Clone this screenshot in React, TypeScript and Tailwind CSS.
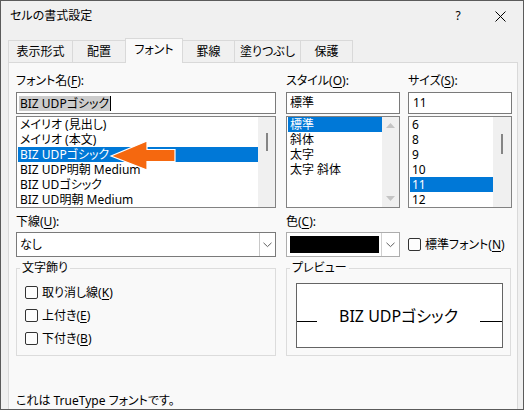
import React from "react";

const tabs = [
  { label: "表示形式", w: "w-[65px]" },
  { label: "配置", w: "w-[54px]" },
  { label: "フォント", w: "w-[58px]", active: true },
  { label: "罫線", w: "w-[53px]" },
  { label: "塗りつぶし", w: "w-[67px]" },
  { label: "保護", w: "w-[53px]" },
];

const fonts = [
  "メイリオ (見出し)",
  "メイリオ (本文)",
  "BIZ UDPゴシック",
  "BIZ UDP明朝 Medium",
  "BIZ UDゴシック",
  "BIZ UD明朝 Medium",
];
const styles = ["標準", "斜体", "太字", "太字 斜体"];
const sizes = ["6", "8", "9", "10", "11", "12"];

function U({ c }: { c: string }) {
  return <span className="underline underline-offset-2">{c}</span>;
}

function Chevron() {
  return (
    <svg width="9" height="6" viewBox="0 0 9 6" className="block">
      <path d="M0.5 0.8 L4.5 4.6 L8.5 0.8" fill="none" stroke="#606060" strokeWidth="1" />
    </svg>
  );
}

function Checkbox() {
  return <div className="w-[13px] h-[13px] border border-[#333333] rounded-[2px] bg-[#fdfdfd] shrink-0" />;
}

function ListItems({ items, selected }: { items: string[]; selected: number }) {
  return (
    <div className="flex-1 pl-px">
      {items.map((t, i) => (
        <div
          key={t}
          className={
            "h-[15px] leading-[15px] pl-[2px] whitespace-nowrap " +
            (i === selected ? "bg-[#0078d7] text-white" : "")
          }
        >
          {t}
        </div>
      ))}
    </div>
  );
}

export default function App() {
  return (
    <div className="relative w-[524px] h-[410px] border border-[#5b5b5b] bg-[#f0f0f0] flex flex-col text-[12px] text-black font-['Noto_Sans','Noto_Sans_CJK_JP',sans-serif] [font-feature-settings:'palt'] overflow-hidden">
      {/* title bar */}
      <div className="h-[30px] flex items-center pl-[9px] shrink-0">
        <span className="flex-1">セルの書式設定</span>
        <span className="w-[12px] text-center mr-[31px]">?</span>
        <svg width="11" height="11" viewBox="0 0 11 11" className="mr-[17px]">
          <path d="M0.5 0.5 L10.5 10.5 M10.5 0.5 L0.5 10.5" stroke="#000" strokeWidth="1" />
        </svg>
      </div>

      {/* tabs */}
      <div className="flex items-end pl-[7px] pt-[7px] shrink-0">
        {tabs.map((t, i) => (
          <div
            key={t.label}
            className={
              t.w +
              " flex items-center justify-center border-t border-l border-r border-[#d9d9d9] " +
              (i > 0 ? "-ml-px " : "") +
              (t.active ? "h-[25px] bg-[#f9f9f9] relative z-10 -mb-px pb-[2px]" : "h-[22px] bg-[#f0f0f0]")
            }
          >
            {t.label}
          </div>
        ))}
      </div>

      {/* panel */}
      <div className="flex-1 w-[510px] ml-[7px] border-t border-l border-r border-[#d9d9d9] bg-[#f9f9f9] pl-[7px] pt-[10px] flex flex-col">
        {/* row 1 */}
        <div className="flex">
          <div className="w-[260px] flex flex-col">
            <div className="h-[16px] leading-[16px]">
              フォント名(<U c="F" />):
            </div>
            <div className="mt-[3px] h-[22px] border border-[#7a7a7a] bg-white flex items-center pl-[2px]">
              <span className="bg-[#cccccc] leading-[15px] px-px">BIZ UDPゴシック</span>
              <span className="w-px h-[15px] bg-black" />
            </div>
            <div className="mt-[2px] h-[92px] border border-[#828282] bg-white flex">
              <ListItems items={fonts} selected={2} />
              <div className="w-[17px] bg-[#f0f0f0] relative">
                <div className="absolute left-[8px] top-[16px] w-[2px] h-[18px] bg-[#858585]" />
              </div>
            </div>
          </div>

          <div className="w-[114px] ml-[10px] flex flex-col">
            <div className="h-[16px] leading-[16px]">
              スタイル(<U c="O" />):
            </div>
            <div className="mt-[3px] h-[22px] border border-[#7a7a7a] bg-white flex items-center pl-[3px]">標準</div>
            <div className="mt-[2px] h-[92px] border border-[#828282] bg-white flex">
              <ListItems items={styles} selected={0} />
              <div className="w-[17px] bg-[#f0f0f0] flex flex-col items-center justify-between py-[6px]">
                <svg width="9" height="5" viewBox="0 0 9 5">
                  <path d="M0 5 L4.5 0 L9 5 Z" fill="#c4c4c4" />
                </svg>
                <svg width="9" height="5" viewBox="0 0 9 5">
                  <path d="M0 0 L4.5 5 L9 0 Z" fill="#c4c4c4" />
                </svg>
              </div>
            </div>
          </div>

          <div className="w-[104px] ml-[8px] flex flex-col">
            <div className="h-[16px] leading-[16px]">
              サイズ(<U c="S" />):
            </div>
            <div className="mt-[3px] h-[22px] border border-[#7a7a7a] bg-white flex items-center pl-[4px]">11</div>
            <div className="mt-[2px] h-[92px] border border-[#828282] bg-white flex">
              <ListItems items={sizes} selected={4} />
              <div className="w-[18px] bg-[#f0f0f0] relative">
                <div className="absolute left-[8px] top-[17px] w-[2px] h-[20px] bg-[#858585]" />
              </div>
            </div>
          </div>
        </div>

        {/* row 2 */}
        <div className="flex mt-[6px]">
          <div className="w-[260px] flex flex-col">
            <div className="h-[16px] leading-[16px]">
              下線(<U c="U" />):
            </div>
            <div className="mt-[2px] h-[25px] border border-[#7a7a7a] bg-white flex">
              <div className="flex-1 flex items-center pl-[3px]">なし</div>
              <div className="w-[16px] border-l border-[#c8c8c8] flex items-center justify-center">
                <Chevron />
              </div>
            </div>
          </div>

          <div className="w-[114px] ml-[10px] flex flex-col">
            <div className="h-[16px] leading-[16px]">
              色(<U c="C" />):
            </div>
            <div className="mt-[2px] h-[25px] border border-[#adadad] bg-white flex">
              <div className="flex-1 p-[3px] pr-[2px]">
                <div className="w-full h-full bg-black" />
              </div>
              <div className="w-[18px] border-l border-[#d0d0d0] flex items-center justify-center">
                <Chevron />
              </div>
            </div>
          </div>

          <div className="ml-[8px] flex flex-col">
            <div className="h-[16px]" />
            <div className="mt-[2px] h-[25px] flex items-center">
              <Checkbox />
              <span className="ml-[4px] whitespace-nowrap">
                標準フォント(<U c="N" />)
              </span>
            </div>
          </div>
        </div>

        {/* groups */}
        <div className="flex mt-[3px]">
          <fieldset className="w-[260px] h-[96px] border border-[#dcdcdc]">
            <legend className="ml-[3px] px-[2px] leading-[16px]">文字飾り</legend>
            <div className="pt-[5px] pl-[8px] flex flex-col">
              <div className="h-[23px] flex items-center">
                <Checkbox />
                <span className="ml-[4px]">
                  取り消し線(<U c="K" />)
                </span>
              </div>
              <div className="h-[23px] flex items-center">
                <Checkbox />
                <span className="ml-[4px]">
                  上付き(<U c="E" />)
                </span>
              </div>
              <div className="h-[23px] flex items-center">
                <Checkbox />
                <span className="ml-[4px]">
                  下付き(<U c="B" />)
                </span>
              </div>
            </div>
          </fieldset>

          <fieldset className="w-[225px] h-[96px] ml-[10px] border border-[#dcdcdc]">
            <legend className="ml-[3px] px-[2px] leading-[16px]">プレビュー</legend>
            <div className="ml-[9px] mt-[7px] w-[207px] h-[65px] border border-[#646464] bg-white flex items-center">
              <div className="w-[20px] h-px bg-black mt-[12px]" />
              <div className="flex-1 text-center text-[16px]">BIZ UDPゴシック</div>
              <div className="w-[22px] h-px bg-black mt-[12px]" />
            </div>
          </fieldset>
        </div>

        <div className="mt-[37px] h-[16px] leading-[16px]">これは TrueType フォントです。</div>
      </div>

      {/* orange arrow callout */}
      <svg width="70" height="34" viewBox="0 0 70 34" className="absolute left-[107px] top-[138px]">
        <path
          d="M3 17 L39 2 L39 10.5 L67 10.5 L67 22.5 L39 22.5 L39 31 Z"
          fill="#f5680f"
          stroke="#ffffff"
          strokeWidth="1.2"
          strokeLinejoin="miter"
        />
      </svg>
    </div>
  );
}
